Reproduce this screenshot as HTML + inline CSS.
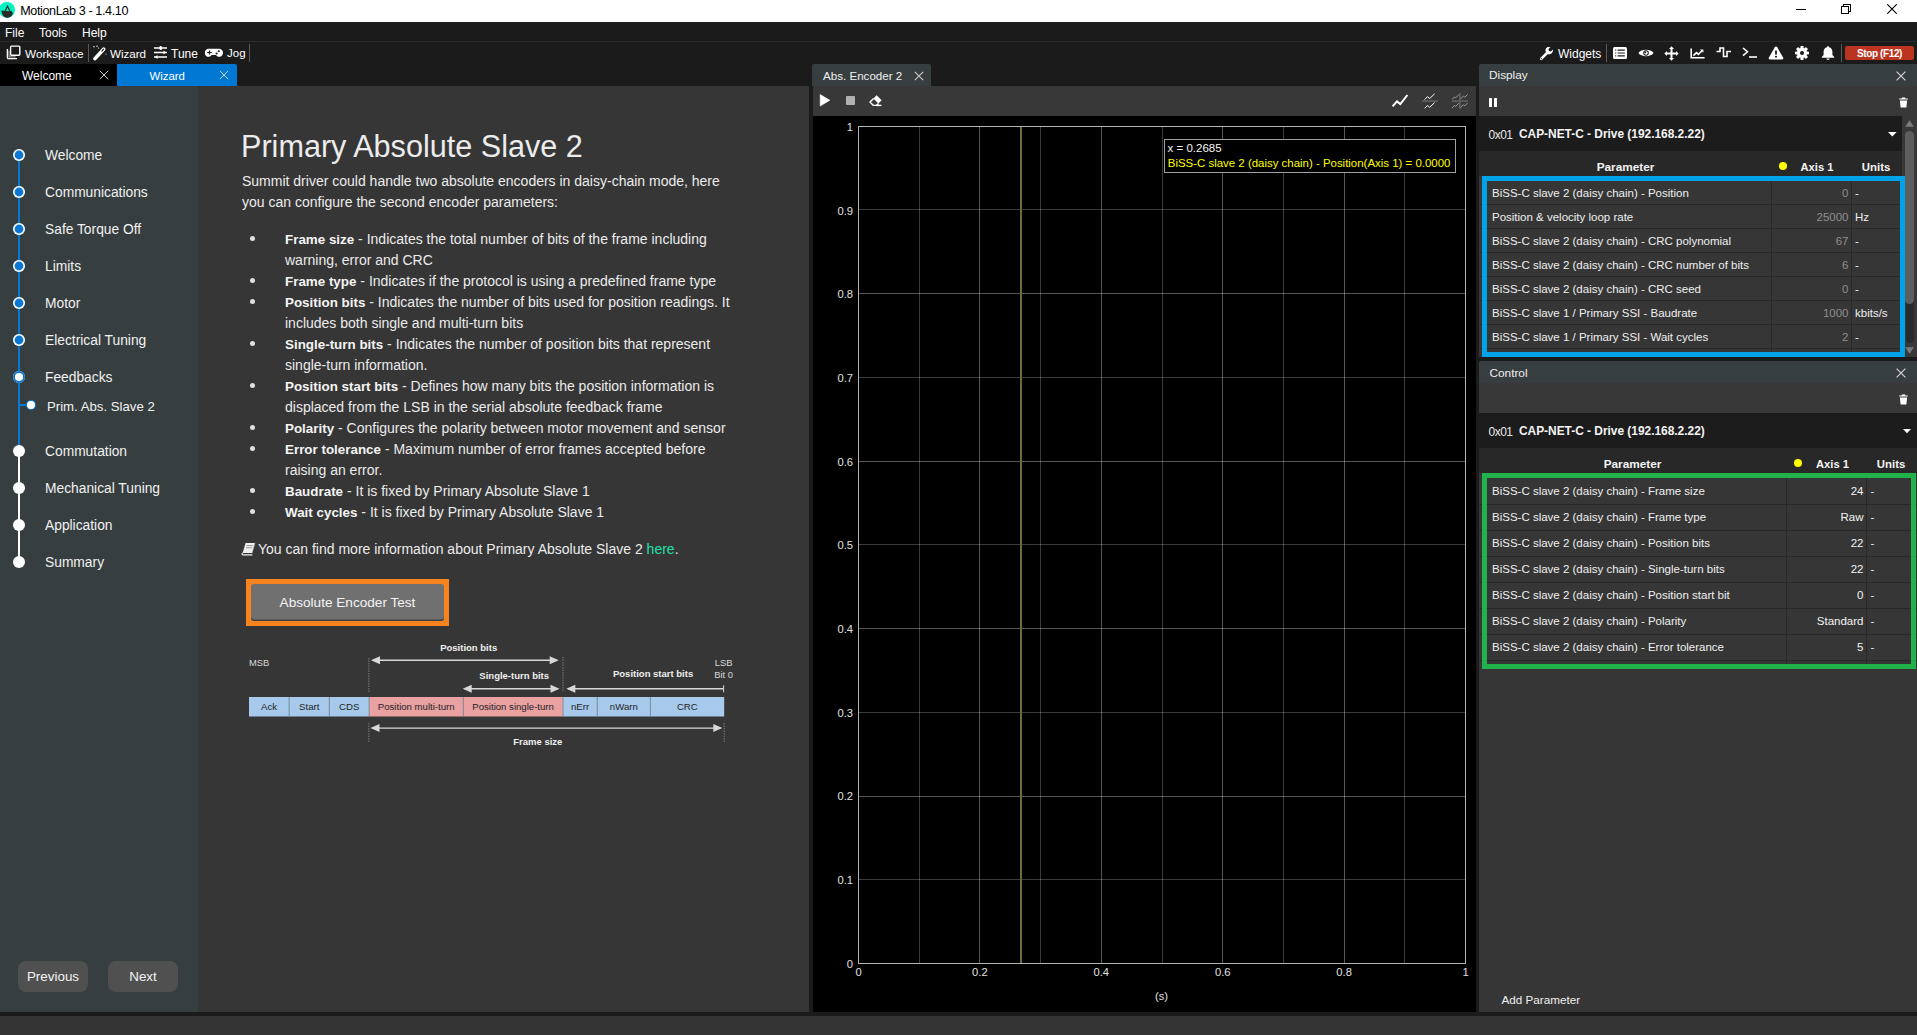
<!DOCTYPE html>
<html><head><meta charset="utf-8">
<style>
*{box-sizing:border-box;margin:0;padding:0}
html,body{width:1917px;height:1035px;overflow:hidden;background:#1b1b1b;font-family:"Liberation Sans",sans-serif;color:#fff}
.a{position:absolute}
.t{position:absolute;white-space:nowrap;line-height:1}
</style></head><body>
<!-- title bar -->
<div class="a" style="left:0;top:0;width:1917px;height:22px;background:#fff"></div>
<!-- menu bar -->
<div class="a" style="left:0;top:22px;width:1917px;height:19px;background:#1b1b1b"></div>
<div class="a" style="left:0;top:41px;width:1917px;height:1px;background:#2c2c2c"></div>
<!-- toolbar -->
<div class="a" style="left:0;top:42px;width:1917px;height:22px;background:#1b1b1b"></div>
<!-- tab bar -->
<div class="a" style="left:0;top:64px;width:117px;height:22px;background:#000"></div>
<div class="a" style="left:117px;top:64px;width:120px;height:22px;background:#0078d4;border-top-right-radius:2px"></div>
<!-- nav panel -->
<div class="a" style="left:0;top:86px;width:198px;height:926px;background:#363e3f"></div>
<!-- main content -->
<div class="a" style="left:198px;top:86px;width:611px;height:926px;background:#363636"></div>
<!-- chart dock -->
<div class="a" style="left:812px;top:64px;width:119px;height:22px;background:#373e3f;border-radius:2px 2px 0 0"></div>
<div class="a" style="left:813px;top:86px;width:663px;height:30px;background:#383838"></div>
<div class="a" style="left:813px;top:116px;width:663px;height:896px;background:#000"></div>
<!-- display dock -->
<div class="a" style="left:1479px;top:64px;width:438px;height:22px;background:#373e3f;border-radius:2px 0 0 0"></div>
<div class="a" style="left:1479px;top:86px;width:438px;height:30px;background:#383838"></div>
<div class="a" style="left:1479px;top:116px;width:438px;height:241px;background:#363636"></div>
<!-- control dock -->
<div class="a" style="left:1479px;top:361px;width:438px;height:22px;background:#373e3f;border-radius:2px 0 0 0"></div>
<div class="a" style="left:1479px;top:383px;width:438px;height:30px;background:#383838"></div>
<div class="a" style="left:1479px;top:413px;width:438px;height:599px;background:#363636"></div>

<!-- TITLE CONTENT -->
<svg class="a" style="left:0;top:2px" width="16" height="17" viewBox="0 0 16 17">
<circle cx="7" cy="7.9" r="8" fill="#00f2c2"/>
<path d="M7.5,2.8 L11,10 L4,10 Z" fill="#2a2a2a"/>
<path d="M7.5,5.6 L9.3,9.4 L5.7,9.4 Z" fill="#00f2c2"/>
<path d="M1.4,8.6 L4.5,9 L10.5,9.5 L11.5,8.8 L12.5,10.5 L12.8,11.8 C11.5,14.8 9.4,15.8 7.2,15.8 C4.2,15.8 2,13.4 1.4,8.6 Z" fill="#2a2a2a"/>
</svg>
<div class="t" style="left:20.2px;top:4.5px;font-size:12.6px;letter-spacing:-0.38px;color:#000">MotionLab 3 - 1.4.10</div>
<div class="a" style="left:1796px;top:9px;width:10px;height:1px;background:#000"></div>
<div class="a" style="left:1843px;top:4px;width:8px;height:8px;border:1px solid #000"></div>
<div class="a" style="left:1841px;top:6px;width:8px;height:8px;border:1px solid #000;background:#fff"></div>
<svg class="a" style="left:1887px;top:4px" width="10" height="10" viewBox="0 0 10 10"><path d="M0.3,0.3 L9.7,9.7 M9.7,0.3 L0.3,9.7" stroke="#000" stroke-width="1.1"/></svg>
<!-- MENU -->
<div class="t" style="left:5px;top:26.7px;font-size:12px">File</div>
<div class="t" style="left:39px;top:26.7px;font-size:12px">Tools</div>
<div class="t" style="left:82px;top:26.7px;font-size:12px">Help</div>
<!-- TOOLBAR LEFT -->
<svg class="a" style="left:6px;top:45px" width="16" height="15" viewBox="0 0 16 15">
<rect x="4.6" y="1.1" width="9.2" height="9.2" rx="1" fill="none" stroke="#fff" stroke-width="1.4"/>
<path d="M1.4,4 L1.4,12.4 Q1.4,13.6 2.6,13.6 L11,13.6" fill="none" stroke="#fff" stroke-width="1.4"/>
<path d="M3,5.6 L3,11.9 L9.6,11.9" fill="none" stroke="#cfcfcf" stroke-width="0.8"/>
</svg>
<div class="t" style="left:25px;top:47.6px;font-size:11.75px">Workspace</div>
<div class="a" style="left:88px;top:44px;width:1px;height:18px;background:#5a5a5a"></div>
<svg class="a" style="left:92px;top:45px" width="16" height="16" viewBox="0 0 16 16">
<path d="M3,13.6 L11.6,4.2" stroke="#fff" stroke-width="3.6" stroke-linecap="round"/>
<path d="M9.9,6.1 L11.6,4.2" stroke="#1b1b1b" stroke-width="1.2" stroke-linecap="round"/>
<circle cx="2" cy="1.8" r="0.7" fill="#fff"/><circle cx="5" cy="1.3" r="0.7" fill="#fff"/><circle cx="6.5" cy="3" r="0.6" fill="#fff"/><circle cx="14" cy="9" r="0.6" fill="#fff"/>
</svg>
<div class="t" style="left:110px;top:47.7px;font-size:11.6px">Wizard</div>
<svg class="a" style="left:153px;top:45px" width="15" height="15" viewBox="0 0 15 15">
<path d="M1,3 L14,3 M1,7.5 L14,7.5 M1,12 L14,12" stroke="#fff" stroke-width="1.6"/>
<rect x="6.5" y="1" width="2.4" height="4" rx="1" fill="#fff"/>
<path d="M10.5,5.6 L13,7.5 L10.5,9.4 Z" fill="#fff"/>
<path d="M4.5,10.1 L2,12 L4.5,13.9 Z" fill="#fff"/>
</svg>
<div class="t" style="left:171px;top:47.5px;font-size:12px">Tune</div>
<svg class="a" style="left:204px;top:48px" width="20" height="10" viewBox="0 0 20 12" preserveAspectRatio="none">
<path d="M5,0.8 L14.5,0.8 C17.5,0.8 19,2.8 19,5.6 C19,8.8 17,10.6 15,10.6 C13.5,10.6 12.8,9.2 11.8,8.4 L7.8,8.4 C6.8,9.2 6,10.6 4.5,10.6 C2.5,10.6 0.8,8.8 0.8,5.6 C0.8,2.8 2.2,0.8 5,0.8 Z" fill="#fff"/>
<path d="M3.2,5.4 L7.8,5.4 M5.5,3.1 L5.5,7.7" stroke="#1b1b1b" stroke-width="1.3"/>
<circle cx="14.8" cy="3.8" r="1.1" fill="#1b1b1b"/><circle cx="12.6" cy="6.6" r="1.1" fill="#1b1b1b"/>
</svg>
<div class="t" style="left:227px;top:47.8px;font-size:11.5px">Jog</div>
<div class="a" style="left:249px;top:44px;width:1px;height:18px;background:#5a5a5a"></div>
<!-- TOOLBAR RIGHT -->
<svg class="a" style="left:1539px;top:46px" width="15" height="15" viewBox="0 0 15 15">
<path d="M2.2,12.8 L8,7" stroke="#fff" stroke-width="2.6" stroke-linecap="round"/>
<path d="M6.6,5.4 C6,3 7.6,0.8 10,0.9 L11.4,1 L9.4,3.2 L10,4.9 L11.8,5.5 L13.9,3.5 C14.2,6.2 12.4,8.5 9.6,8.4 Z" fill="#fff"/>
<circle cx="2.3" cy="12.7" r="0.6" fill="#1b1b1b"/>
</svg>
<div class="t" style="left:1558px;top:47.5px;font-size:12px">Widgets</div>
<div class="a" style="left:1606px;top:44px;width:1px;height:18px;background:#5a5a5a"></div>
<svg class="a" style="left:1613px;top:47px" width="14" height="12" viewBox="0 0 14 12">
<rect x="0" y="0" width="14" height="12" rx="1.6" fill="#fff"/>
<path d="M2.2,3.2 L3.2,3.2 M2.2,6 L3.2,6 M2.2,8.8 L3.2,8.8 M4.6,3.2 L11.8,3.2 M4.6,6 L11.8,6 M4.6,8.8 L11.8,8.8" stroke="#1b1b1b" stroke-width="1.2"/>
</svg>
<svg class="a" style="left:1638px;top:48px" width="16" height="10" viewBox="0 0 16 10">
<path d="M0.5,5 C3,0.8 13,0.8 15.5,5 C13,9.2 3,9.2 0.5,5 Z" fill="#fff"/>
<circle cx="8" cy="5" r="2.8" fill="#1b1b1b"/><circle cx="8" cy="5" r="1.8" fill="#fff"/><circle cx="7.3" cy="4.4" r="0.9" fill="#1b1b1b"/>
</svg>
<svg class="a" style="left:1664px;top:45.5px" width="15" height="15" viewBox="0 0 15 15">
<path d="M7.5,0.3 L10,3 L8.5,3 L8.5,6.5 L12,6.5 L12,5 L14.7,7.5 L12,10 L12,8.5 L8.5,8.5 L8.5,12 L10,12 L7.5,14.7 L5,12 L6.5,12 L6.5,8.5 L3,8.5 L3,10 L0.3,7.5 L3,5 L3,6.5 L6.5,6.5 L6.5,3 L5,3 Z" fill="#fff"/>
</svg>
<svg class="a" style="left:1690px;top:47px" width="15" height="13" viewBox="0 0 15 13">
<path d="M1.2,1.4 L1.2,10.8 L14.6,10.8" fill="none" stroke="#fff" stroke-width="1.6"/>
<path d="M3.4,8.6 L6.4,5.6 L8.4,7.4 L12,3.8" fill="none" stroke="#fff" stroke-width="1.6"/>
<path d="M10,2.4 L13.4,2.4 L13.4,5.8 Z" fill="#fff"/>
</svg>
<svg class="a" style="left:1716px;top:47px" width="16" height="11" viewBox="0 0 16 11">
<path d="M0.5,4.5 L4,4.5 L4,1 L7.5,1 L7.5,9.5 L11,9.5 L11,4.5 L15,4.5" fill="none" stroke="#fff" stroke-width="1.6"/>
</svg>
<svg class="a" style="left:1742px;top:47px" width="16" height="11" viewBox="0 0 16 11">
<path d="M1,1 L5.5,4.8 L1,8.6" fill="none" stroke="#fff" stroke-width="1.6"/>
<path d="M7,10 L15,10" stroke="#fff" stroke-width="1.6"/>
</svg>
<svg class="a" style="left:1768px;top:46px" width="16" height="14" viewBox="0 0 16 14">
<path d="M8,0.5 C8.6,0.5 8.9,0.8 9.2,1.3 L15.2,11.7 C15.6,12.5 15.2,13.4 14.2,13.4 L1.8,13.4 C0.8,13.4 0.4,12.5 0.8,11.7 L6.8,1.3 C7.1,0.8 7.4,0.5 8,0.5 Z" fill="#fff"/>
<path d="M8,4.5 L8,8.6" stroke="#1b1b1b" stroke-width="1.8"/><circle cx="8" cy="10.8" r="1" fill="#1b1b1b"/>
</svg>
<svg class="a" style="left:1795px;top:46px" width="14" height="14" viewBox="0 0 14 14">
<g transform="translate(7 7)" fill="#fff">
<circle r="5"/>
<rect x="-1.6" y="-7" width="3.2" height="14" rx="0.8"/>
<rect x="-1.6" y="-7" width="3.2" height="14" rx="0.8" transform="rotate(45)"/>
<rect x="-1.6" y="-7" width="3.2" height="14" rx="0.8" transform="rotate(90)"/>
<rect x="-1.6" y="-7" width="3.2" height="14" rx="0.8" transform="rotate(135)"/>
<circle r="2" fill="#1b1b1b"/>
</g></svg>
<svg class="a" style="left:1821px;top:46px" width="14" height="14" viewBox="0 0 14 14">
<path d="M7,0.3 C7.6,0.3 8,0.7 8,1.3 C10.3,1.8 11.4,3.6 11.4,6 L11.4,9 L13.2,11 L13.2,11.8 L0.8,11.8 L0.8,11 L2.6,9 L2.6,6 C2.6,3.6 3.7,1.8 6,1.3 C6,0.7 6.4,0.3 7,0.3 Z" fill="#fff"/>
<path d="M5.4,12.6 L8.6,12.6 C8.6,13.4 7.9,13.9 7,13.9 C6.1,13.9 5.4,13.4 5.4,12.6 Z" fill="#fff"/>
</svg>
<div class="a" style="left:1841px;top:44px;width:1px;height:18px;background:#5a5a5a"></div>
<div class="a" style="left:1845px;top:46px;width:69px;height:14px;background:#bb341f;border-radius:2px"></div>
<div class="t" style="left:1846px;width:67px;text-align:center;top:48.8px;font-size:10px;font-weight:bold;letter-spacing:-0.38px">Stop (F12)</div>
<!-- TABS -->
<div class="t" style="left:22px;top:70.2px;font-size:12px">Welcome</div>
<svg class="a" style="left:99px;top:70px" width="10" height="10" viewBox="0 0 10 10"><path d="M0.8,0.8 L9.2,9.2 M9.2,0.8 L0.8,9.2" stroke="#d0d0d0" stroke-width="1"/></svg>
<div class="t" style="left:149.5px;top:70.6px;font-size:11.4px">Wizard</div>
<svg class="a" style="left:219px;top:70px" width="10" height="10" viewBox="0 0 10 10"><path d="M0.8,0.8 L9.2,9.2 M9.2,0.8 L0.8,9.2" stroke="#d0d0d0" stroke-width="1"/></svg>

<!-- NAV -->
<div class="a" style="left:18px;top:155px;width:2px;height:296px;background:#0a78d2"></div>
<div class="a" style="left:18px;top:451px;width:2px;height:111px;background:#fff"></div>
<div class="a" style="left:19px;top:404px;width:10px;height:2px;background:#0a78d2"></div>
<div class="a" style="left:13px;top:149px;width:12px;height:12px;border-radius:50%;background:#0a78d2;box-shadow:inset 0 0 0 1.6px #fff"></div>
<div class="t" style="left:45px;top:149.1px;font-size:13.8px;color:#f2f2f2">Welcome</div>
<div class="a" style="left:13px;top:186px;width:12px;height:12px;border-radius:50%;background:#0a78d2;box-shadow:inset 0 0 0 1.6px #fff"></div>
<div class="t" style="left:45px;top:186.1px;font-size:13.8px;color:#f2f2f2">Communications</div>
<div class="a" style="left:13px;top:223px;width:12px;height:12px;border-radius:50%;background:#0a78d2;box-shadow:inset 0 0 0 1.6px #fff"></div>
<div class="t" style="left:45px;top:223.1px;font-size:13.8px;color:#f2f2f2">Safe Torque Off</div>
<div class="a" style="left:13px;top:260px;width:12px;height:12px;border-radius:50%;background:#0a78d2;box-shadow:inset 0 0 0 1.6px #fff"></div>
<div class="t" style="left:45px;top:260.1px;font-size:13.8px;color:#f2f2f2">Limits</div>
<div class="a" style="left:13px;top:297px;width:12px;height:12px;border-radius:50%;background:#0a78d2;box-shadow:inset 0 0 0 1.6px #fff"></div>
<div class="t" style="left:45px;top:297.1px;font-size:13.8px;color:#f2f2f2">Motor</div>
<div class="a" style="left:13px;top:334px;width:12px;height:12px;border-radius:50%;background:#0a78d2;box-shadow:inset 0 0 0 1.6px #fff"></div>
<div class="t" style="left:45px;top:334.1px;font-size:13.8px;color:#f2f2f2">Electrical Tuning</div>
<div class="a" style="left:13px;top:371px;width:12px;height:12px;border-radius:50%;background:#fff;box-shadow:inset 0 0 0 1.9px #0a78d2"></div>
<div class="t" style="left:45px;top:371.1px;font-size:13.8px;color:#f2f2f2">Feedbacks</div>
<div class="a" style="left:13px;top:445px;width:12px;height:12px;border-radius:50%;background:#fff"></div>
<div class="t" style="left:45px;top:445.1px;font-size:13.8px;color:#f2f2f2">Commutation</div>
<div class="a" style="left:13px;top:482px;width:12px;height:12px;border-radius:50%;background:#fff"></div>
<div class="t" style="left:45px;top:482.1px;font-size:13.8px;color:#f2f2f2">Mechanical Tuning</div>
<div class="a" style="left:13px;top:519px;width:12px;height:12px;border-radius:50%;background:#fff"></div>
<div class="t" style="left:45px;top:519.1px;font-size:13.8px;color:#f2f2f2">Application</div>
<div class="a" style="left:13px;top:556px;width:12px;height:12px;border-radius:50%;background:#fff"></div>
<div class="t" style="left:45px;top:556.1px;font-size:13.8px;color:#f2f2f2">Summary</div>
<div class="a" style="left:27.3px;top:401.4px;width:7.4px;height:7.4px;border-radius:50%;background:#fff;box-shadow:0 0 0 1px #0a78d2"></div>
<div class="t" style="left:47px;top:400.0px;font-size:13.2px;color:#f2f2f2">Prim. Abs. Slave 2</div>
<div class="a" style="left:18px;top:961px;width:70px;height:31px;border-radius:8px;background:#505050"></div>
<div class="a" style="left:108px;top:961px;width:70px;height:31px;border-radius:8px;background:#505050"></div>
<div class="t" style="left:18px;width:70px;text-align:center;top:970.4px;font-size:13.4px;color:#f4f4f4">Previous</div>
<div class="t" style="left:108px;width:70px;text-align:center;top:970.4px;font-size:13.4px;color:#f4f4f4">Next</div>

<!-- MAIN CONTENT -->
<div class="t" style="left:241px;top:130.8px;font-size:30.6px;color:#ececec">Primary Absolute Slave 2</div>
<div class="t" style="left:242px;top:173.9px;font-size:14px;color:#ececec">Summit driver could handle two absolute encoders in daisy-chain mode, here</div>
<div class="t" style="left:242px;top:194.9px;font-size:14px;color:#ececec">you can configure the second encoder parameters:</div>
<div class="a" style="left:249.5px;top:236.3px;width:5px;height:5px;border-radius:50%;background:#e0e0e0"></div>
<div class="t" style="left:285px;top:232.1px;font-size:14px;color:#ececec"><b style="font-size:13.4px;color:#f4f4f4">Frame size</b> - Indicates the total number of bits of the frame including</div>
<div class="t" style="left:285px;top:253.1px;font-size:14px;color:#ececec">warning, error and CRC</div>
<div class="a" style="left:249.5px;top:278.3px;width:5px;height:5px;border-radius:50%;background:#e0e0e0"></div>
<div class="t" style="left:285px;top:274.1px;font-size:14px;color:#ececec"><b style="font-size:13.4px;color:#f4f4f4">Frame type</b> - Indicates if the protocol is using a predefined frame type</div>
<div class="a" style="left:249.5px;top:299.3px;width:5px;height:5px;border-radius:50%;background:#e0e0e0"></div>
<div class="t" style="left:285px;top:295.1px;font-size:14px;color:#ececec"><b style="font-size:13.4px;color:#f4f4f4">Position bits</b> - Indicates the number of bits used for position readings. It</div>
<div class="t" style="left:285px;top:316.1px;font-size:14px;color:#ececec">includes both single and multi-turn bits</div>
<div class="a" style="left:249.5px;top:341.3px;width:5px;height:5px;border-radius:50%;background:#e0e0e0"></div>
<div class="t" style="left:285px;top:337.1px;font-size:14px;color:#ececec"><b style="font-size:13.4px;color:#f4f4f4">Single-turn bits</b> - Indicates the number of position bits that represent</div>
<div class="t" style="left:285px;top:358.1px;font-size:14px;color:#ececec">single-turn information.</div>
<div class="a" style="left:249.5px;top:383.3px;width:5px;height:5px;border-radius:50%;background:#e0e0e0"></div>
<div class="t" style="left:285px;top:379.1px;font-size:14px;color:#ececec"><b style="font-size:13.4px;color:#f4f4f4">Position start bits</b> - Defines how many bits the position information is</div>
<div class="t" style="left:285px;top:400.1px;font-size:14px;color:#ececec">displaced from the LSB in the serial absolute feedback frame</div>
<div class="a" style="left:249.5px;top:425.3px;width:5px;height:5px;border-radius:50%;background:#e0e0e0"></div>
<div class="t" style="left:285px;top:421.1px;font-size:14px;color:#ececec"><b style="font-size:13.4px;color:#f4f4f4">Polarity</b> - Configures the polarity between motor movement and sensor</div>
<div class="a" style="left:249.5px;top:446.3px;width:5px;height:5px;border-radius:50%;background:#e0e0e0"></div>
<div class="t" style="left:285px;top:442.1px;font-size:14px;color:#ececec"><b style="font-size:13.4px;color:#f4f4f4">Error tolerance</b> - Maximum number of error frames accepted before</div>
<div class="t" style="left:285px;top:463.1px;font-size:14px;color:#ececec">raising an error.</div>
<div class="a" style="left:249.5px;top:488.3px;width:5px;height:5px;border-radius:50%;background:#e0e0e0"></div>
<div class="t" style="left:285px;top:484.1px;font-size:14px;color:#ececec"><b style="font-size:13.4px;color:#f4f4f4">Baudrate</b> - It is fixed by Primary Absolute Slave 1</div>
<div class="a" style="left:249.5px;top:509.3px;width:5px;height:5px;border-radius:50%;background:#e0e0e0"></div>
<div class="t" style="left:285px;top:505.1px;font-size:14px;color:#ececec"><b style="font-size:13.4px;color:#f4f4f4">Wait cycles</b> - It is fixed by Primary Absolute Slave 1</div>
<svg class="a" style="left:241px;top:542px" width="15" height="14" viewBox="0 0 15 14">
<path d="M4.6,1 L14,1 L11.2,11 L1.6,11 Z" fill="#f0f0f0"/>
<path d="M1.6,11 C0.8,11.4 0.8,12.8 1.8,12.9 L11.4,12.9" fill="none" stroke="#f0f0f0" stroke-width="1.1"/>
<path d="M5.6,3.6 L11.8,3.6 M5,5.8 L11.2,5.8" stroke="#8a8a8a" stroke-width="0.9"/>
<path d="M11.2,11 L14,1" stroke="#9a9a9a" stroke-width="0.6"/>
</svg>
<div class="t" style="left:258px;top:541.6px;font-size:14px;color:#ececec">You can find more information about Primary Absolute Slave 2 <span style="color:#1fe0a8">here</span>.</div>
<div class="a" style="left:246px;top:579px;width:203px;height:47px;background:#f7841f"></div>
<div class="a" style="left:251px;top:584px;width:193px;height:37px;border-radius:3px;background:#707070;box-shadow:inset 0 -1.5px 0 #424242"></div>
<div class="t" style="left:251px;width:193px;text-align:center;top:596.1px;font-size:13.6px;color:#f4f4f4">Absolute Encoder Test</div>

<!-- DIAGRAM -->
<svg class="a" style="left:0;top:0" width="809" height="760" viewBox="0 0 809 760" font-family="Liberation Sans">
<rect x="249" y="697" width="40.1" height="19.5" fill="#a6c9ec"/>
<text x="269.1" y="710.2" font-size="9.6" fill="#242424" text-anchor="middle">Ack</text>
<rect x="289.1" y="697" width="40.2" height="19.5" fill="#a6c9ec"/>
<text x="309.2" y="710.2" font-size="9.6" fill="#242424" text-anchor="middle">Start</text>
<rect x="329.3" y="697" width="39.8" height="19.5" fill="#a6c9ec"/>
<text x="349.2" y="710.2" font-size="9.6" fill="#242424" text-anchor="middle">CDS</text>
<rect x="369.1" y="697" width="94.2" height="19.5" fill="#e9a1a1"/>
<text x="416.2" y="710.2" font-size="9.6" fill="#242424" text-anchor="middle">Position multi-turn</text>
<rect x="463.3" y="697" width="99.7" height="19.5" fill="#e9a1a1"/>
<text x="513.1" y="710.2" font-size="9.6" fill="#242424" text-anchor="middle">Position single-turn</text>
<rect x="563" y="697" width="34.2" height="19.5" fill="#a6c9ec"/>
<text x="580.1" y="710.2" font-size="9.6" fill="#242424" text-anchor="middle">nErr</text>
<rect x="597.2" y="697" width="53.2" height="19.5" fill="#a6c9ec"/>
<text x="623.8" y="710.2" font-size="9.6" fill="#242424" text-anchor="middle">nWarn</text>
<rect x="650.4" y="697" width="73.8" height="19.5" fill="#a6c9ec"/>
<text x="687.3" y="710.2" font-size="9.6" fill="#242424" text-anchor="middle">CRC</text>
<line x1="289.1" y1="697" x2="289.1" y2="716.5" stroke="#7e8a96" stroke-width="0.9"/>
<line x1="329.3" y1="697" x2="329.3" y2="716.5" stroke="#7e8a96" stroke-width="0.9"/>
<line x1="369.1" y1="697" x2="369.1" y2="716.5" stroke="#7e8a96" stroke-width="0.9"/>
<line x1="463.3" y1="697" x2="463.3" y2="716.5" stroke="#7e8a96" stroke-width="0.9"/>
<line x1="563" y1="697" x2="563" y2="716.5" stroke="#7e8a96" stroke-width="0.9"/>
<line x1="597.2" y1="697" x2="597.2" y2="716.5" stroke="#7e8a96" stroke-width="0.9"/>
<line x1="650.4" y1="697" x2="650.4" y2="716.5" stroke="#7e8a96" stroke-width="0.9"/>
<line x1="368.9" y1="658" x2="368.9" y2="692" stroke="#9a9a9a" stroke-width="0.7" stroke-dasharray="1.5,1"/>
<line x1="563" y1="657" x2="563" y2="692" stroke="#9a9a9a" stroke-width="0.7" stroke-dasharray="1.5,1"/>
<line x1="368.9" y1="723" x2="368.9" y2="742" stroke="#9a9a9a" stroke-width="0.7" stroke-dasharray="1.5,1"/>
<line x1="724.2" y1="723" x2="724.2" y2="742" stroke="#9a9a9a" stroke-width="0.7" stroke-dasharray="1.5,1"/>
<line x1="373" y1="660.3" x2="556.7" y2="660.3" stroke="#d8d8d8" stroke-width="1.4"/>
<path d="M371,660.3 L380,656.3 L380,664.3 Z" fill="#d8d8d8"/>
<path d="M558.7,660.3 L549.7,656.3 L549.7,664.3 Z" fill="#d8d8d8"/>
<line x1="464.7" y1="688.8" x2="557.5" y2="688.8" stroke="#d8d8d8" stroke-width="1.4"/>
<path d="M462.7,688.8 L471.7,684.8 L471.7,692.8 Z" fill="#d8d8d8"/>
<path d="M559.5,688.8 L550.5,684.8 L550.5,692.8 Z" fill="#d8d8d8"/>
<line x1="568.3" y1="688.8" x2="723.6" y2="688.8" stroke="#d8d8d8" stroke-width="1.4"/>
<path d="M566.3,688.8 L575.3,684.8 L575.3,692.8 Z" fill="#d8d8d8"/>
<line x1="723.6" y1="685.3" x2="723.6" y2="692.3" stroke="#d8d8d8" stroke-width="1"/>
<line x1="372.5" y1="728.1" x2="720.3" y2="728.1" stroke="#d8d8d8" stroke-width="1.4"/>
<path d="M370.5,728.1 L379.5,724.1 L379.5,732.1 Z" fill="#d8d8d8"/>
<path d="M722.3,728.1 L713.3,724.1 L713.3,732.1 Z" fill="#d8d8d8"/>
<text x="468.7" y="651" font-size="9.5" font-weight="bold" fill="#f0f0f0" text-anchor="middle">Position bits</text>
<text x="514.2" y="679" font-size="9.5" font-weight="bold" fill="#f0f0f0" text-anchor="middle">Single-turn bits</text>
<text x="653.1" y="677.4" font-size="9.5" font-weight="bold" fill="#f0f0f0" text-anchor="middle">Position start bits</text>
<text x="537.8" y="745.2" font-size="9.5" font-weight="bold" fill="#f0f0f0" text-anchor="middle">Frame size</text>
<text x="249" y="666.4" font-size="9.4" fill="#d8d8d8">MSB</text>
<text x="723.6" y="665.8" font-size="9.4" fill="#d8d8d8" text-anchor="middle">LSB</text>
<text x="723.6" y="678" font-size="9.4" fill="#d8d8d8" text-anchor="middle">Bit 0</text>
</svg>

<!-- CHART DOCK -->
<div class="t" style="left:823px;top:70.2px;font-size:11.6px;color:#f0f0f0">Abs. Encoder 2</div>
<svg class="a" style="left:914px;top:70.5px" width="10" height="10" viewBox="0 0 10 10"><path d="M0.8,0.8 L9.2,9.2 M9.2,0.8 L0.8,9.2" stroke="#ccc" stroke-width="1.1"/></svg>
<svg class="a" style="left:819px;top:94px" width="13" height="13" viewBox="0 0 13 13"><path d="M1.2,0.6 L10.8,6.3 L1.2,12 Z" fill="#fff" stroke="#fff" stroke-width="0.6" stroke-linejoin="round"/></svg>
<div class="a" style="left:846px;top:95.5px;width:9px;height:9.5px;background:#b0b0b0;border-radius:1px"></div>
<svg class="a" style="left:868px;top:94px" width="15" height="13" viewBox="0 0 15 13">
<path d="M5.4,4.4 L8.6,1.2 L13.6,6.2 L10.4,9.4 Z" fill="#fff"/>
<path d="M5.6,4.4 L2,8 L5.4,11.4 L8.4,11.4 L10.4,9.4" fill="none" stroke="#fff" stroke-width="1.4" stroke-linejoin="round"/>
<path d="M8.2,11.4 L13.4,11.4" stroke="#fff" stroke-width="1.4"/>
</svg>
<svg class="a" style="left:1391px;top:93px" width="18" height="16" viewBox="0 0 18 16">
<path d="M1.6,13.4 L6,8.4 L9.3,11 L16.4,2" fill="none" stroke="#fff" stroke-width="2"/>
</svg>
<svg class="a" style="left:1421px;top:92px" width="18" height="18" viewBox="0 0 18 18">
<rect x="1" y="8.2" width="16" height="1.8" fill="#5c5c5c"/>
<path d="M3.6,7.6 L6.6,4.6 L8.6,6.6 L13.6,1.8" fill="none" stroke="#fff" stroke-width="1"/>
<path d="M3.6,16.4 L6.6,13.4 L8.6,15.4 L13.6,10.6" fill="none" stroke="#fff" stroke-width="1"/>
</svg>
<svg class="a" style="left:1451px;top:92px" width="18" height="18" viewBox="0 0 18 18">
<rect x="1" y="8.2" width="16" height="1.8" fill="#5c5c5c"/>
<rect x="8" y="1" width="1.8" height="16" fill="#5c5c5c"/>
<path d="M1,7.4 L3.4,5 L4.8,5.8 L7.8,2.6 M9.6,6.8 L12.4,4.2 L13.8,5.2 L16.6,2.4" fill="none" stroke="#9a9a9a" stroke-width="1"/>
<path d="M1,16 L3.4,13.6 L4.8,14.4 L7.8,11.2 M9.6,15.4 L12.4,12.8 L13.8,13.8 L16.6,11" fill="none" stroke="#9a9a9a" stroke-width="1"/>
</svg>
<svg class="a" style="left:0;top:0" width="1476" height="1012" viewBox="0 0 1476 1012" font-family="Liberation Sans" shape-rendering="crispEdges">
<line x1="919.5" y1="126" x2="919.5" y2="963" stroke="#fff" stroke-opacity="0.23" stroke-width="1"/>
<line x1="979.5" y1="126" x2="979.5" y2="963" stroke="#fff" stroke-opacity="0.335" stroke-width="1"/>
<line x1="1040.5" y1="126" x2="1040.5" y2="963" stroke="#fff" stroke-opacity="0.23" stroke-width="1"/>
<line x1="1101.5" y1="126" x2="1101.5" y2="963" stroke="#fff" stroke-opacity="0.335" stroke-width="1"/>
<line x1="1162.5" y1="126" x2="1162.5" y2="963" stroke="#fff" stroke-opacity="0.23" stroke-width="1"/>
<line x1="1222.5" y1="126" x2="1222.5" y2="963" stroke="#fff" stroke-opacity="0.335" stroke-width="1"/>
<line x1="1283.5" y1="126" x2="1283.5" y2="963" stroke="#fff" stroke-opacity="0.23" stroke-width="1"/>
<line x1="1344.5" y1="126" x2="1344.5" y2="963" stroke="#fff" stroke-opacity="0.335" stroke-width="1"/>
<line x1="1404.5" y1="126" x2="1404.5" y2="963" stroke="#fff" stroke-opacity="0.23" stroke-width="1"/>
<line x1="858" y1="209.5" x2="1465" y2="209.5" stroke="#fff" stroke-opacity="0.23" stroke-width="1"/>
<line x1="858" y1="293.5" x2="1465" y2="293.5" stroke="#fff" stroke-opacity="0.335" stroke-width="1"/>
<line x1="858" y1="377.5" x2="1465" y2="377.5" stroke="#fff" stroke-opacity="0.23" stroke-width="1"/>
<line x1="858" y1="461.5" x2="1465" y2="461.5" stroke="#fff" stroke-opacity="0.335" stroke-width="1"/>
<line x1="858" y1="544.5" x2="1465" y2="544.5" stroke="#fff" stroke-opacity="0.23" stroke-width="1"/>
<line x1="858" y1="628.5" x2="1465" y2="628.5" stroke="#fff" stroke-opacity="0.335" stroke-width="1"/>
<line x1="858" y1="712.5" x2="1465" y2="712.5" stroke="#fff" stroke-opacity="0.23" stroke-width="1"/>
<line x1="858" y1="796.5" x2="1465" y2="796.5" stroke="#fff" stroke-opacity="0.335" stroke-width="1"/>
<line x1="858" y1="879.5" x2="1465" y2="879.5" stroke="#fff" stroke-opacity="0.23" stroke-width="1"/>
<rect x="858.5" y="126.5" width="607" height="837" fill="none" stroke="#b4b4b4" stroke-width="1"/>
</svg>

<svg class="a" style="left:0;top:0" width="1476" height="1012" viewBox="0 0 1476 1012" font-family="Liberation Sans">
<text x="853" y="130.8" font-size="11.2" fill="#e0e0e0" text-anchor="end">1</text>
<text x="853" y="214.5" font-size="11.2" fill="#e0e0e0" text-anchor="end">0.9</text>
<text x="853" y="298.2" font-size="11.2" fill="#e0e0e0" text-anchor="end">0.8</text>
<text x="853" y="381.9" font-size="11.2" fill="#e0e0e0" text-anchor="end">0.7</text>
<text x="853" y="465.6" font-size="11.2" fill="#e0e0e0" text-anchor="end">0.6</text>
<text x="853" y="549.3" font-size="11.2" fill="#e0e0e0" text-anchor="end">0.5</text>
<text x="853" y="633.0" font-size="11.2" fill="#e0e0e0" text-anchor="end">0.4</text>
<text x="853" y="716.7" font-size="11.2" fill="#e0e0e0" text-anchor="end">0.3</text>
<text x="853" y="800.4" font-size="11.2" fill="#e0e0e0" text-anchor="end">0.2</text>
<text x="853" y="884.1" font-size="11.2" fill="#e0e0e0" text-anchor="end">0.1</text>
<text x="853" y="967.8" font-size="11.2" fill="#e0e0e0" text-anchor="end">0</text>
<text x="858.5" y="975.8" font-size="11.2" fill="#e0e0e0" text-anchor="middle">0</text>
<text x="979.9" y="975.8" font-size="11.2" fill="#e0e0e0" text-anchor="middle">0.2</text>
<text x="1101.3" y="975.8" font-size="11.2" fill="#e0e0e0" text-anchor="middle">0.4</text>
<text x="1222.7" y="975.8" font-size="11.2" fill="#e0e0e0" text-anchor="middle">0.6</text>
<text x="1344.1" y="975.8" font-size="11.2" fill="#e0e0e0" text-anchor="middle">0.8</text>
<text x="1465.5" y="975.8" font-size="11.2" fill="#e0e0e0" text-anchor="middle">1</text>
<text x="1161.5" y="1000.4" font-size="11.2" fill="#e0e0e0" text-anchor="middle">(s)</text>
<line x1="1021" y1="127" x2="1021" y2="963" stroke="#6e6c38" stroke-width="2"/>
<rect x="1164.5" y="139.5" width="291" height="33" fill="#000" stroke="#a0a0a0" stroke-width="1"/>
<text x="1167.6" y="152.3" font-size="11.5" fill="#f4f4f4">x = 0.2685</text>
<text x="1167.8" y="167.1" font-size="11.45" fill="#ffff00">BiSS-C slave 2 (daisy chain) - Position(Axis 1) = 0.0000</text>
</svg>


<!-- DISPLAY DOCK -->
<div class="t" style="left:1489px;top:70.4px;font-size:11.8px;color:#f0f0f0">Display</div>
<svg class="a" style="left:1895.5px;top:70.5px" width="10" height="10" viewBox="0 0 10 10"><path d="M0.6,0.6 L9.4,9.4 M9.4,0.6 L0.6,9.4" stroke="#d8d8d8" stroke-width="1.1"/></svg>
<div class="a" style="left:1489px;top:97.5px;width:3px;height:9px;background:#fff;border-radius:0.5px"></div><div class="a" style="left:1494px;top:97.5px;width:3px;height:9px;background:#fff;border-radius:0.5px"></div>
<svg class="a" style="left:1898.5px;top:96.5px" width="9" height="11" viewBox="0 0 9 11"><path d="M0.2,1.6 L8.8,1.6 L8.8,2.6 L0.2,2.6 Z M3,0.4 L6,0.4 L6.4,1.6 L2.6,1.6 Z" fill="#fff"/><path d="M0.9,3.4 L8.1,3.4 L7.4,10.6 L1.6,10.6 Z" fill="#fff"/></svg>
<div class="a" style="left:1479px;top:116px;width:423px;height:35px;background:#1c1c1c"></div>
<div class="t" style="left:1488.5px;top:128.8px;font-size:12px;letter-spacing:-0.5px;color:#e8e8e8">0x01</div>
<div class="t" style="left:1519px;top:128.8px;font-size:11.9px;font-weight:bold;color:#f4f4f4">CAP-NET-C - Drive (192.168.2.22)</div>
<svg class="a" style="left:1888px;top:131.5px" width="9" height="5" viewBox="0 0 9 5"><path d="M0,0 L8.6,0 L4.3,4.6 Z" fill="#fff"/></svg>
<div class="a" style="left:1479px;top:151px;width:423px;height:25px;background:#282828"></div>
<div class="t" style="left:1525px;width:201px;text-align:center;top:161.5px;font-size:11.8px;font-weight:bold;color:#f4f4f4">Parameter</div>
<div class="a" style="left:1779px;top:162px;width:8.4px;height:8.4px;border-radius:50%;background:#ffff00"></div>
<div class="t" style="left:1800.5px;top:162.0px;font-size:11.2px;font-weight:bold;color:#f4f4f4">Axis 1</div>
<div class="t" style="left:1861.8px;top:161.8px;font-size:11.4px;font-weight:bold;color:#f4f4f4">Units</div>
<div class="a" style="left:1479px;top:176px;width:423px;height:181px;background:#282828"></div>
<div class="a" style="left:1479px;top:176px;width:423px;height:28px;background:#363636"></div>
<div class="a" style="left:1479px;top:205px;width:423px;height:23px;background:#363636"></div>
<div class="a" style="left:1479px;top:229px;width:423px;height:23px;background:#363636"></div>
<div class="a" style="left:1479px;top:253px;width:423px;height:23px;background:#363636"></div>
<div class="a" style="left:1479px;top:277px;width:423px;height:23px;background:#363636"></div>
<div class="a" style="left:1479px;top:301px;width:423px;height:23px;background:#363636"></div>
<div class="a" style="left:1479px;top:325px;width:423px;height:23px;background:#363636"></div>
<div class="a" style="left:1479px;top:349px;width:423px;height:8px;background:#363636"></div>
<div class="a" style="left:1771px;top:176px;width:1px;height:181px;background:#282828"></div>
<div class="a" style="left:1851px;top:176px;width:1px;height:181px;background:#282828"></div>
<div class="t" style="left:1492px;top:188.2px;font-size:11.5px;color:#f0f0f0">BiSS-C slave 2 (daisy chain) - Position</div>
<div class="t" style="left:1772px;width:76.5px;text-align:right;top:188.2px;font-size:11.5px;color:#8e8e8e">0</div>
<div class="t" style="left:1855px;top:188.2px;font-size:11.5px;color:#f0f0f0">-</div>
<div class="t" style="left:1492px;top:212.2px;font-size:11.5px;color:#f0f0f0">Position &amp; velocity loop rate</div>
<div class="t" style="left:1772px;width:76.5px;text-align:right;top:212.2px;font-size:11.5px;color:#8e8e8e">25000</div>
<div class="t" style="left:1855px;top:212.2px;font-size:11.5px;color:#f0f0f0">Hz</div>
<div class="t" style="left:1492px;top:236.2px;font-size:11.5px;color:#f0f0f0">BiSS-C slave 2 (daisy chain) - CRC polynomial</div>
<div class="t" style="left:1772px;width:76.5px;text-align:right;top:236.2px;font-size:11.5px;color:#8e8e8e">67</div>
<div class="t" style="left:1855px;top:236.2px;font-size:11.5px;color:#f0f0f0">-</div>
<div class="t" style="left:1492px;top:260.2px;font-size:11.5px;color:#f0f0f0">BiSS-C slave 2 (daisy chain) - CRC number of bits</div>
<div class="t" style="left:1772px;width:76.5px;text-align:right;top:260.2px;font-size:11.5px;color:#8e8e8e">6</div>
<div class="t" style="left:1855px;top:260.2px;font-size:11.5px;color:#f0f0f0">-</div>
<div class="t" style="left:1492px;top:284.2px;font-size:11.5px;color:#f0f0f0">BiSS-C slave 2 (daisy chain) - CRC seed</div>
<div class="t" style="left:1772px;width:76.5px;text-align:right;top:284.2px;font-size:11.5px;color:#8e8e8e">0</div>
<div class="t" style="left:1855px;top:284.2px;font-size:11.5px;color:#f0f0f0">-</div>
<div class="t" style="left:1492px;top:308.2px;font-size:11.5px;color:#f0f0f0">BiSS-C slave 1 / Primary SSI - Baudrate</div>
<div class="t" style="left:1772px;width:76.5px;text-align:right;top:308.2px;font-size:11.5px;color:#8e8e8e">1000</div>
<div class="t" style="left:1855px;top:308.2px;font-size:11.5px;color:#f0f0f0">kbits/s</div>
<div class="t" style="left:1492px;top:332.2px;font-size:11.5px;color:#f0f0f0">BiSS-C slave 1 / Primary SSI - Wait cycles</div>
<div class="t" style="left:1772px;width:76.5px;text-align:right;top:332.2px;font-size:11.5px;color:#8e8e8e">2</div>
<div class="t" style="left:1855px;top:332.2px;font-size:11.5px;color:#f0f0f0">-</div>
<div class="a" style="left:1902px;top:116px;width:15px;height:241px;background:#383838"></div>
<div class="a" style="left:1905.5px;top:131px;width:8px;height:212px;border-radius:4px;background:#2a2a2a"></div>
<div class="a" style="left:1905px;top:131px;width:9px;height:172.5px;border-radius:4.5px;background:#5e5e5e"></div>
<svg class="a" style="left:1905px;top:120px" width="9" height="7" viewBox="0 0 9 7"><path d="M4.5,0.3 L8.8,6.8 L0.2,6.8 Z" fill="#7c7c7c"/></svg>
<svg class="a" style="left:1905px;top:346.5px" width="9" height="7" viewBox="0 0 9 7"><path d="M0.2,0.2 L8.8,0.2 L4.5,6.8 Z" fill="#7c7c7c"/></svg>
<div class="a" style="left:1482px;top:176px;width:423px;height:181px;border:5px solid #00a2e8"></div>
<!-- CONTROL DOCK -->
<div class="t" style="left:1489.5px;top:367.6px;font-size:11.8px;color:#f0f0f0">Control</div>
<svg class="a" style="left:1895.5px;top:367.8px" width="10" height="10" viewBox="0 0 10 10"><path d="M0.6,0.6 L9.4,9.4 M9.4,0.6 L0.6,9.4" stroke="#d8d8d8" stroke-width="1.1"/></svg>
<svg class="a" style="left:1898.5px;top:393.6px" width="9" height="11" viewBox="0 0 9 11"><path d="M0.2,1.6 L8.8,1.6 L8.8,2.6 L0.2,2.6 Z M3,0.4 L6,0.4 L6.4,1.6 L2.6,1.6 Z" fill="#fff"/><path d="M0.9,3.4 L8.1,3.4 L7.4,10.6 L1.6,10.6 Z" fill="#fff"/></svg>
<div class="a" style="left:1479px;top:413px;width:438px;height:35px;background:#1c1c1c"></div>
<div class="t" style="left:1488.5px;top:425.9px;font-size:12px;letter-spacing:-0.5px;color:#e8e8e8">0x01</div>
<div class="t" style="left:1519px;top:426.0px;font-size:11.9px;font-weight:bold;color:#f4f4f4">CAP-NET-C - Drive (192.168.2.22)</div>
<svg class="a" style="left:1903px;top:429px" width="9" height="5" viewBox="0 0 9 5"><path d="M0,0 L8,0 L4,4.3 Z" fill="#fff"/></svg>
<div class="a" style="left:1479px;top:448px;width:438px;height:25px;background:#282828"></div>
<div class="t" style="left:1532px;width:201px;text-align:center;top:459.4px;font-size:11.8px;font-weight:bold;color:#f4f4f4">Parameter</div>
<div class="a" style="left:1794px;top:459px;width:8.4px;height:8.4px;border-radius:50%;background:#ffff00"></div>
<div class="t" style="left:1816px;top:459.2px;font-size:11.2px;font-weight:bold;color:#f4f4f4">Axis 1</div>
<div class="t" style="left:1876.8px;top:459.0px;font-size:11.4px;font-weight:bold;color:#f4f4f4">Units</div>
<div class="a" style="left:1479px;top:473px;width:438px;height:196px;background:#282828"></div>
<div class="a" style="left:1479px;top:473px;width:438px;height:31px;background:#363636"></div>
<div class="a" style="left:1479px;top:505px;width:438px;height:25px;background:#363636"></div>
<div class="a" style="left:1479px;top:531px;width:438px;height:25px;background:#363636"></div>
<div class="a" style="left:1479px;top:557px;width:438px;height:25px;background:#363636"></div>
<div class="a" style="left:1479px;top:583px;width:438px;height:25px;background:#363636"></div>
<div class="a" style="left:1479px;top:609px;width:438px;height:25px;background:#363636"></div>
<div class="a" style="left:1479px;top:635px;width:438px;height:25px;background:#363636"></div>
<div class="a" style="left:1479px;top:661px;width:438px;height:8px;background:#363636"></div>
<div class="a" style="left:1786px;top:473px;width:1px;height:196px;background:#282828"></div>
<div class="a" style="left:1866px;top:473px;width:1px;height:196px;background:#282828"></div>
<div class="t" style="left:1492px;top:486.4px;font-size:11.5px;color:#f0f0f0">BiSS-C slave 2 (daisy chain) - Frame size</div>
<div class="t" style="left:1787px;width:76.5px;text-align:right;top:486.4px;font-size:11.5px;color:#f4f4f4">24</div>
<div class="t" style="left:1870.5px;top:486.4px;font-size:11.5px;color:#f0f0f0">-</div>
<div class="t" style="left:1492px;top:512.4px;font-size:11.5px;color:#f0f0f0">BiSS-C slave 2 (daisy chain) - Frame type</div>
<div class="t" style="left:1787px;width:76.5px;text-align:right;top:512.4px;font-size:11.5px;color:#f4f4f4">Raw</div>
<div class="t" style="left:1870.5px;top:512.4px;font-size:11.5px;color:#f0f0f0">-</div>
<div class="t" style="left:1492px;top:538.4px;font-size:11.5px;color:#f0f0f0">BiSS-C slave 2 (daisy chain) - Position bits</div>
<div class="t" style="left:1787px;width:76.5px;text-align:right;top:538.4px;font-size:11.5px;color:#f4f4f4">22</div>
<div class="t" style="left:1870.5px;top:538.4px;font-size:11.5px;color:#f0f0f0">-</div>
<div class="t" style="left:1492px;top:564.4px;font-size:11.5px;color:#f0f0f0">BiSS-C slave 2 (daisy chain) - Single-turn bits</div>
<div class="t" style="left:1787px;width:76.5px;text-align:right;top:564.4px;font-size:11.5px;color:#f4f4f4">22</div>
<div class="t" style="left:1870.5px;top:564.4px;font-size:11.5px;color:#f0f0f0">-</div>
<div class="t" style="left:1492px;top:590.4px;font-size:11.5px;color:#f0f0f0">BiSS-C slave 2 (daisy chain) - Position start bit</div>
<div class="t" style="left:1787px;width:76.5px;text-align:right;top:590.4px;font-size:11.5px;color:#f4f4f4">0</div>
<div class="t" style="left:1870.5px;top:590.4px;font-size:11.5px;color:#f0f0f0">-</div>
<div class="t" style="left:1492px;top:616.4px;font-size:11.5px;color:#f0f0f0">BiSS-C slave 2 (daisy chain) - Polarity</div>
<div class="t" style="left:1787px;width:76.5px;text-align:right;top:616.4px;font-size:11.5px;color:#f4f4f4">Standard</div>
<div class="t" style="left:1870.5px;top:616.4px;font-size:11.5px;color:#f0f0f0">-</div>
<div class="t" style="left:1492px;top:642.4px;font-size:11.5px;color:#f0f0f0">BiSS-C slave 2 (daisy chain) - Error tolerance</div>
<div class="t" style="left:1787px;width:76.5px;text-align:right;top:642.4px;font-size:11.5px;color:#f4f4f4">5</div>
<div class="t" style="left:1870.5px;top:642.4px;font-size:11.5px;color:#f0f0f0">-</div>
<div class="a" style="left:1482px;top:473px;width:434px;height:196px;border:5px solid #22b24c"></div>
<div class="t" style="left:1501.5px;top:994.3px;font-size:11.7px;color:#f0f0f0">Add Parameter</div>

<!-- status bar -->
<div class="a" style="left:0;top:1016px;width:1917px;height:19px;background:#333"></div>
</body></html>
